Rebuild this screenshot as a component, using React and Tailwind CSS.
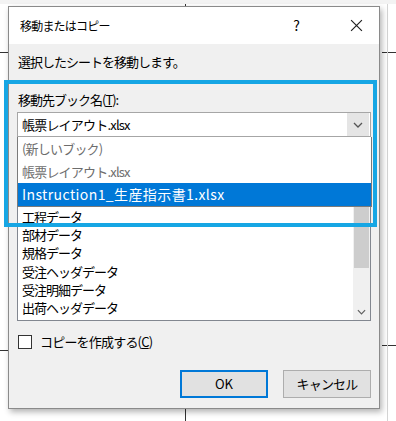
const sheets = [
  "工程データ",
  "部材データ",
  "規格データ",
  "受注ヘッダデータ",
  "受注明細データ",
  "出荷ヘッダデータ",
];

const books = [
  { name: "(新しいブック)", muted: true },
  { name: "帳票レイアウト.xlsx", muted: true },
  { name: "Instruction1_生産指示書1.xlsx", selected: true },
];

function Chevron({ className = "" }) {
  return (
    <svg viewBox="0 0 10 6" className={className} fill="none">
      <path d="M1 1l4 4 4-4" stroke="currentColor" strokeWidth="1.3" />
    </svg>
  );
}

function SheetList() {
  return (
    <div className="flex h-[169px] border border-[#828790] bg-white">
      {/* list is scrolled; the rows above sit under the open combo list */}
      <div className="flex-1 overflow-hidden pl-[4px] pt-[55px]">
        {sheets.map((s) => (
          <div key={s} className="h-[18.2px] text-[13px] leading-[18.2px] tracking-[-1px] text-black">
            {s}
          </div>
        ))}
      </div>
      <div className="flex w-[17px] flex-col bg-[#f0f0f0]">
        <div className="h-[17px]" />
        <div className="flex-1 px-[1px]">
          <div className="mt-[30px] h-[68px] bg-[#cdcdcd]" />
        </div>
        <div className="flex h-[17px] items-center justify-center text-[#606060]">
          <Chevron className="h-[6px] w-[9px]" />
        </div>
      </div>
    </div>
  );
}

export default function App() {
  return (
    <div className="relative h-[421px] w-[396px] overflow-hidden bg-white font-['Noto_Sans_CJK_JP',sans-serif] text-black">
      {/* spreadsheet grid peeking out behind the dialog */}
      <div className="absolute left-[185px] top-0 h-[6px] w-px bg-[#333]" />
      <div className="absolute bottom-0 left-[185px] h-[12px] w-px bg-[#333]" />
      <div className="absolute left-0 top-[52px] h-px w-[8px] bg-[#333]" />
      <div className="absolute right-0 top-[52px] h-px w-[14px] bg-[#333]" />
      <div className="absolute left-0 top-[350px] h-px w-[8px] bg-[#333]" />
      <div className="absolute right-0 top-[345px] h-px w-[14px] bg-[#333]" />
      <div className="absolute right-[8px] top-0 h-full w-px bg-[#d4d4d4]" />
      <div className="absolute left-0 top-0 h-[4px] w-full bg-[#f3f3f3]" />

      <div className="relative ml-[8px] mt-[6px] flex h-[403px] w-[372px] flex-col border border-[#8a8a8a] bg-[#f0f0f0] shadow-[2px_3px_6px_rgba(0,0,0,0.3)]">
        <div className="flex h-[37px] items-center bg-white pl-[11px] pr-[16px]">
          <span className="flex-1 text-[12px] tracking-[-0.8px]">移動またはコピー</span>
          <span className="mr-[50px] text-[14px]">?</span>
          <svg viewBox="0 0 12 12" className="h-[13px] w-[13px]">
            <path d="M1 1l10 10M11 1L1 11" stroke="#222" strokeWidth="1.1" />
          </svg>
        </div>

        <div className="flex flex-1 flex-col px-[8px]">
          <p className="mt-[9px] pl-[1px] text-[13px] leading-[18px] tracking-[-1px]">
            選択したシートを移動します。
          </p>
          <p className="mt-[20px] pl-[1px] text-[13px] leading-[18px] tracking-[-1px]">
            移動先ブック名(<span className="underline">T</span>):
          </p>
          <div className="mt-[3px] flex h-[25px] items-center border border-[#a6a6a6] bg-white">
            <span className="flex-1 pl-[4px] text-[13px] tracking-[-0.8px]">帳票レイアウト.xlsx</span>
            <div className="mr-px flex h-[23px] w-[22px] items-center justify-center bg-[#e5e5e5] text-[#555]">
              <Chevron className="h-[6px] w-[10px]" />
            </div>
          </div>
          <div className="mt-[15px]">
            <SheetList />
          </div>

          <label className="mt-[12px] flex h-[18px] items-center gap-[8px] pl-[1px]">
            <span className="h-[14px] w-[14px] border border-[#333] bg-white" />
            <span className="text-[13px] tracking-[-0.8px]">
              コピーを作成する(<span className="underline">C</span>)
            </span>
          </label>

          <div className="mt-[19px] flex justify-end gap-[15px]">
            <button className="h-[28px] w-[88px] border-2 border-[#0078d7] bg-[#e1e1e1] text-[13px]">
              OK
            </button>
            <button className="h-[28px] w-[88px] border border-[#adadad] bg-[#e1e1e1] text-[13px] tracking-[-0.8px]">
              キャンセル
            </button>
          </div>
        </div>
      </div>

      {/* open combo-box list */}
      <div className="absolute left-[17px] top-[137px] w-[355px] border border-t-0 border-[#7a7a7a] bg-white">
        {books.map((b) => (
          <div
            key={b.name}
            className={
              b.selected
                ? "h-[23px] bg-[#0078d7] pl-[4px] text-[14px] leading-[23px] tracking-[0.4px] text-white"
                : "h-[23px] pl-[4px] text-[13px] leading-[23px] tracking-[-0.8px] text-[#6d6d6d]"
            }
          >
            {b.name}
          </div>
        ))}
      </div>

      {/* highlight frame */}
      <div className="absolute left-[4px] top-[80px] h-[147px] w-[373px] border-[4px] border-[#16a6e4]" />
    </div>
  );
}
